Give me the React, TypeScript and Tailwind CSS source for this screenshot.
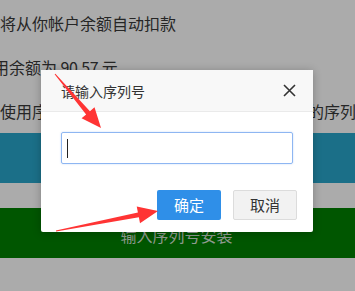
import React from 'react'

type Pt = [number, number]

// tapered annotation arrow, tail -> tip
function arrowPoints(tail: Pt, tip: Pt, headLen: number, headW: number, shaftW: number) {
  const dx = tip[0] - tail[0], dy = tip[1] - tail[1]
  const len = Math.hypot(dx, dy)
  const ux = dx / len, uy = dy / len
  const nx = -uy, ny = ux
  const base: Pt = [tip[0] - ux * headLen, tip[1] - uy * headLen]
  const neck: Pt = [tip[0] - ux * (headLen - 4), tip[1] - uy * (headLen - 4)]
  const pts: Pt[] = [
    [tail[0] + nx * 0.5, tail[1] + ny * 0.5],
    [base[0] + nx * shaftW / 2, base[1] + ny * shaftW / 2],
    [neck[0] + nx * headW / 2 - ux * 4, neck[1] + ny * headW / 2 - uy * 4],
    tip,
    [neck[0] - nx * headW / 2 - ux * 4, neck[1] - ny * headW / 2 - uy * 4],
    [base[0] - nx * shaftW / 2, base[1] - ny * shaftW / 2],
    [tail[0] - nx * 0.5, tail[1] - ny * 0.5],
  ]
  return pts.map(p => p.join(',')).join(' ')
}

export default function App() {
  const font = { fontFamily: '"Noto Sans CJK SC", "Noto Sans", sans-serif' }
  return (
    <div className="relative w-[355px] h-[291px] overflow-hidden bg-[#ababab]" style={font}>
      {/* dimmed page behind the modal */}
      <div className="pt-[1px] text-[16px] text-[#262626] whitespace-nowrap">
        <div className="leading-[44px]">将从你帐户余额自动扣款</div>
        <div className="leading-[44px] ml-[-7px]">用余额为 <span className="tracking-[-0.5px]">90.57</span> 元</div>
        <div className="leading-[44px]">使用序列号安装时，请在此处输入您所购买<span className="ml-[4px]">的序列号</span></div>
      </div>
      <div className="h-[50px] bg-[#1b6f88]" />
      <div className="h-[25px]" />
      <div className="h-[50px] bg-[#005600] flex items-center justify-center pt-[4px] pr-[2px] text-[16px] text-[#8f9a8f]">
        输入序列号安装
      </div>

      {/* modal */}
      <div className="absolute left-[41px] top-[70px] w-[272px] h-[162px] bg-white rounded-[2px] shadow-[0_1px_8px_rgba(0,0,0,0.25)] flex flex-col">
        <div className="h-[42px] bg-[#f8f8f8] border-b border-[#eaeaea] flex items-center justify-between pl-[20px] pr-[17px]">
          <span className="text-[14px] text-[#333] pt-[2px]">请输入序列号</span>
          <svg width="13" height="13" viewBox="0 0 13 13" className="text-[#333]">
            <path d="M1 1L12 12M12 1L1 12" stroke="currentColor" strokeWidth="1.6" />
          </svg>
        </div>
        <div className="px-[20px] pt-[20px]">
          <div className="h-[32px] border border-[#8eb6f2] rounded-[2px] shadow-[0_0_2px_rgba(80,140,230,0.35)] flex items-center pl-[5px]">
            <div className="w-[1px] h-[19px] bg-[#222]" />
          </div>
        </div>
        <div className="flex justify-end gap-[12px] pr-[16px] pt-[26px]">
          <button className="w-[64px] h-[30px] rounded-[2px] bg-[#2f8fe8] text-white text-[15px]">确定</button>
          <button className="w-[64px] h-[30px] rounded-[2px] bg-[#f2f2f2] border border-[#dcdcdc] text-[#333] text-[15px]">取消</button>
        </div>
      </div>

      {/* red annotation arrows */}
      <svg className="absolute inset-0" width="355" height="291">
        <polygon points={arrowPoints([55, 74], [101, 128], 20, 17, 5)} fill="#ff3434" />
        <polygon points={arrowPoints([56, 231], [158, 211], 20, 17, 5)} fill="#ff3434" />
      </svg>
    </div>
  )
}
